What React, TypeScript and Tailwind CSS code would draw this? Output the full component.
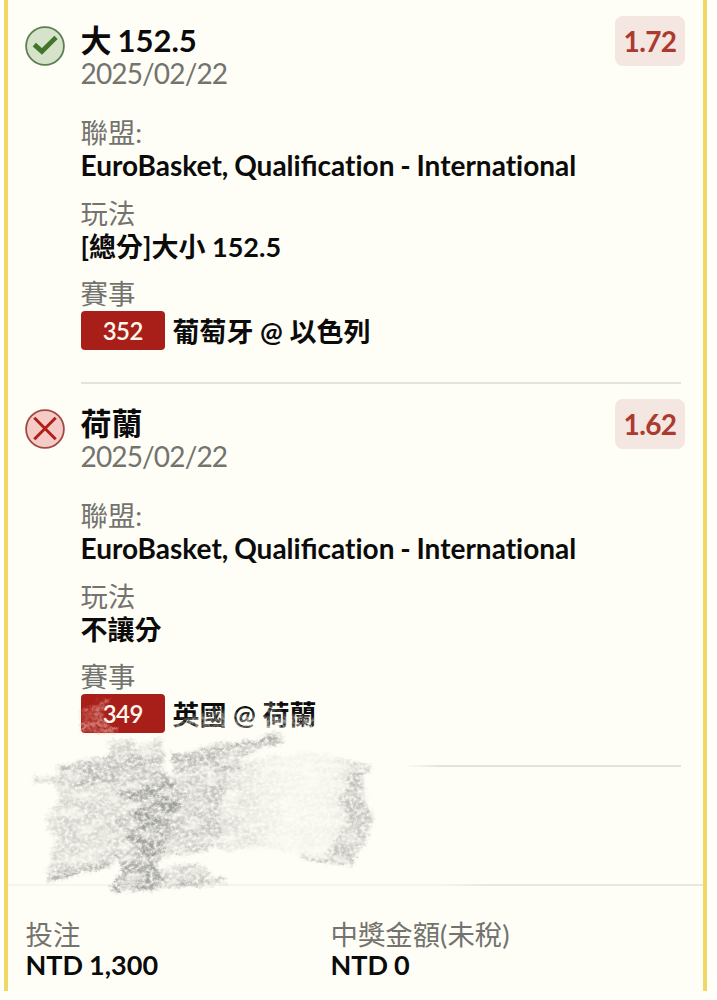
import type { ReactNode } from "react";

type Bet = {
  won: boolean;
  pick: string;
  date: string;
  odds: string;
  play: string;
  code: string;
  match: string;
};

const bets: Bet[] = [
  { won: true, pick: "大 152.5", date: "2025/02/22", odds: "1.72", play: "[總分]大小 152.5", code: "352", match: "葡萄牙 @ 以色列" },
  { won: false, pick: "荷蘭", date: "2025/02/22", odds: "1.62", play: "不讓分", code: "349", match: "英國 @ 荷蘭" },
];

function StatusIcon({ won }: { won: boolean }) {
  return won ? (
    <svg viewBox="0 0 40 40" className="h-10 w-10 shrink-0" fill="none">
      <circle cx="20" cy="20" r="18.9" fill="#d6e3ca" stroke="#5b7f50" strokeWidth="1.8" />
      <path d="M9.3 18.6 L16.9 25.4 L31 11.4" stroke="#417529" strokeWidth="4.8" />
    </svg>
  ) : (
    <svg viewBox="0 0 40 40" className="h-10 w-10 shrink-0" fill="none">
      <circle cx="20" cy="20" r="18.9" fill="#f4cbc6" stroke="#a04842" strokeWidth="1.8" />
      <path d="M9.3 8.8 L30.7 30.2 M30.7 8.8 L9.3 30.2" stroke="#ae2018" strokeWidth="3" />
    </svg>
  );
}

function Label({ children }: { children: ReactNode }) {
  return <div className="h-[34px] text-[27.4px] leading-[35px] text-[#73736f]">{children}</div>;
}

function Value({ children }: { children: ReactNode }) {
  return <div className="h-[34px] text-[27px] font-bold leading-[34px] text-[#0b0b0b]">{children}</div>;
}

function Amount({ label, children }: { label: string; children: ReactNode }) {
  return (
    <div className="w-[305px]">
      <div className="h-[30px] text-[27.4px] leading-[30px] text-[#73736f]">{label}</div>
      <div className="h-[30px] text-[27px] font-bold leading-[30px] text-[#0b0b0b] [word-spacing:-0.5px]">{children}</div>
    </div>
  );
}

function BetItem({ bet }: { bet: Bet }) {
  return (
    <section className="flex h-[383px] pl-[17px]">
      <div className="pt-[26px]">
        <StatusIcon won={bet.won} />
      </div>
      <div className="relative top-px ml-[15.5px] mr-[22px] flex-1 border-b-2 border-[#e5e4dc]">
        <div className="flex justify-between">
          <div className="pt-[23px]">
            <div className="h-[33px] text-[31px] font-bold leading-[33px] text-[#0b0b0b] [word-spacing:-1.5px]">{bet.pick}</div>
            <div className="h-8 text-[28px] leading-8 tracking-[-0.85px] text-[#73736f]">{bet.date}</div>
          </div>
          <div className="-mr-1 mt-[15px] flex h-[50px] w-[70px] items-center justify-center rounded-lg bg-[#f4e6e0] text-[28px] font-bold tracking-[-0.6px] text-[#ab3a30]">
            {bet.odds}
          </div>
        </div>
        <div className="mt-[26px]">
          <Label>聯盟:</Label>
          <div className="h-[34px] whitespace-nowrap text-[28px] font-bold leading-[33px] text-[#0b0b0b] [font-variant-ligatures:none] [word-spacing:-1px]">
            EuroBasket, Quali<span className="[font-variant-ligatures:normal]">fi</span>cation - International
          </div>
        </div>
        <div className="mt-[13px]">
          <Label>玩法</Label>
          <Value>{bet.play}</Value>
        </div>
        <div className="mt-3">
          <Label>賽事</Label>
          <div className="mt-px flex items-center gap-[7.5px]">
            <span className="flex h-[39px] w-[84.5px] items-center justify-center rounded bg-[#a81e18] text-2xl font-semibold tracking-[-0.6px] text-[#fff7ee]">
              {bet.code}
            </span>
            <div className="pt-0.5">
              <Value>{bet.match}</Value>
            </div>
          </div>
        </div>
      </div>
    </section>
  );
}

function Scribble() {
  return (
    <svg viewBox="0 0 717 1000" className="pointer-events-none absolute left-0 top-0 h-[1000px] w-[717px]">
      <defs>
        <filter id="chalk" x="0" y="660" width="480" height="260" filterUnits="userSpaceOnUse" colorInterpolationFilters="sRGB">
          <feTurbulence type="fractalNoise" baseFrequency="0.26 0.3" numOctaves="3" seed="11" result="noise" />
          <feTurbulence type="fractalNoise" baseFrequency="0.05 0.11" numOctaves="3" seed="3" result="broad" />
          <feColorMatrix in="noise" type="matrix" values="0 0 0 0 0  0 0 0 0 0  0 0 0 0 0  0 0 2 0 -0.3" result="grain" />
          <feColorMatrix in="broad" type="matrix" values="0 0 0 0 0  0 0 0 0 0  0 0 0 0 0  0 0 1.8 0 -0.1" result="patches" />
          <feGaussianBlur in="SourceGraphic" stdDeviation="1.5" result="soft" />
          <feDisplacementMap in="soft" in2="broad" scale="9" xChannelSelector="R" yChannelSelector="G" result="bent" />
          <feDisplacementMap in="bent" in2="noise" scale="7" xChannelSelector="R" yChannelSelector="G" result="rough" />
          <feComposite in="rough" in2="grain" operator="in" result="grained" />
          <feComposite in="grained" in2="patches" operator="in" result="worn" />
          <feGaussianBlur in="worn" stdDeviation="0.55" />
        </filter>
        <linearGradient id="fade" x1="0" x2="1">
          <stop offset="0" stopColor="#fffdf6" />
          <stop offset="0.9" stopColor="#fffdf6" />
          <stop offset="1" stopColor="#fffdf6" stopOpacity="0" />
        </linearGradient>
        <linearGradient id="wipe" x1="0" y1="0" x2="0" y2="1">
          <stop offset="0" stopColor="#fffdf6" stopOpacity="0.1" />
          <stop offset="1" stopColor="#fffdf6" stopOpacity="0.9" />
        </linearGradient>
        <linearGradient id="thin" x1="0" x2="1">
          <stop offset="0" stopColor="#a2a2a0" stopOpacity="0.45" />
          <stop offset="0.45" stopColor="#a2a2a0" stopOpacity="0.12" />
          <stop offset="0.7" stopColor="#a2a2a0" stopOpacity="0.14" />
          <stop offset="1" stopColor="#a2a2a0" stopOpacity="0.45" />
        </linearGradient>
      </defs>
      <rect x="75" y="762" width="365" height="8" fill="url(#fade)" />
      <rect x="8" y="882" width="480" height="6" fill="url(#fade)" opacity="0.6" />
      <g filter="url(#chalk)">
        <path d="M81 709 L98 702 L109 699 L108 709 L101 713 L106 725 L118 728 L119 733 L81 733 Z" fill="#e8b2a8" opacity="0.65" />
        <path d="M200 714 L226 708 L258 710 L262 700 L276 700 L280 712 L315 716 L315 731 L172 734 L172 722 Z" fill="url(#wipe)" />
      </g>
      <g filter="url(#chalk)" fill="#a2a2a0">
        <path d="M62 764 L108 757 L160 757 L172 785 L172 858 L118 862 L48 879 L45 871 L55 846 L46 820 L60 796 L54 784 L34 783 L35 775 L56 776 Z" opacity="0.45" />
        <path d="M108 741 L134 739 L136 746 L150 744 L156 738 L161 738 L165 760 L171 783 L58 786 L63 765 L108 757 Z" opacity="0.5" />
        <path d="M172 755 L281 735 L285 743 L240 758 L238 770 L175 774 Z" opacity="0.75" />
        <path d="M171 753 L282 735 L283 741 L172 757 Z" opacity="0.7" />
        <path d="M165 776 L210 774 L232 788 L219 802 L216 814 L222 836 L205 852 L165 855 Z" opacity="0.6" />
        <path d="M115 790 L173 782 L182 806 L160 828 L168 849 L156 866 L164 882 L116 894 L112 886 L122 872 L116 858 L132 845 L117 820 L137 805 Z" fill="#979795" opacity="0.86" />
        <path d="M158 868 L198 862 L214 874 L205 881 L160 886 Z" opacity="0.5" />
        <path d="M215 768 L277 755 L321 753 L371 765 L362 779 L373 819 L367 839 L352 863 L309 857 L277 848 L215 850 Z" fill="url(#thin)" />
        <path d="M352 763 L371 765 L362 775 L361 797 L373 818 L365 838 L352 865 L325 859 L337 839 L348 818 L339 800 L349 782 Z" opacity="0.5" />
        <path d="M300 855 L354 862 L352 867 L300 858 Z M48 873 L110 862 L112 866 L48 881 Z M113 886 L178 880 L225 880 L225 883 L178 886 L117 895 Z" opacity="0.7" />
      </g>
    </svg>
  );
}

export default function App() {
  return (
    <main lang="zh-TW" className="relative h-[1000px] w-[717px] overflow-hidden bg-[#fffffa] px-1 pr-2.5 font-['Lato','Noto_Sans_CJK_TC',sans-serif]">
      <div className="flex h-[991px] flex-col border-x-4 border-[#f0d867] bg-[#fffef6]">
        {bets.map((bet) => (
          <BetItem key={bet.code} bet={bet} />
        ))}
        <footer className="mt-[118px] flex border-t-2 border-[#e9e7df] pl-[17.5px] pt-[34px]">
          <Amount label="投注">NTD 1,300</Amount>
          <Amount label="中獎金額(未稅)">NTD 0</Amount>
        </footer>
      </div>
      <Scribble />
    </main>
  );
}
